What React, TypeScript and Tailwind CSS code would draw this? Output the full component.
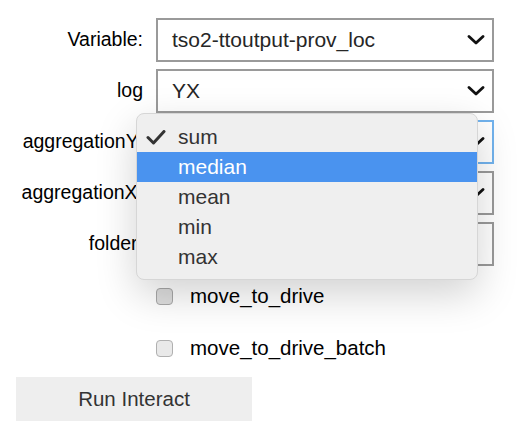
import React from "react";

const Chevron = () => (
  <svg width="18" height="10" viewBox="0 0 18 10" className="absolute right-[7px] top-1/2 -translate-y-1/2">
    <path d="M2 1.5 L9 8 L16 1.5" fill="none" stroke="#111" strokeWidth="2.8" strokeLinecap="round" strokeLinejoin="round" />
  </svg>
);

function SelectBox({ value, focused }: { value?: string; focused?: boolean }) {
  return (
    <div
      className={
        focused
          ? "relative ml-[13px] w-[338px] h-[44px] border-2 border-[#72b3ee] bg-white flex items-center pl-[14px] text-[21px] text-[#262626]"
          : "relative ml-[13px] w-[338px] h-[44px] border-2 border-[#9a9a9a] bg-white flex items-center pl-[14px] text-[21px] text-[#262626]"
      }
    >
      <span>{value}</span>
      <Chevron />
    </div>
  );
}

function Row({ label, value, focused, input }: { label: string; value?: string; focused?: boolean; input?: boolean }) {
  return (
    <div className="flex items-center h-[44px]">
      <div className="w-[143px] text-right text-[19.5px] text-black whitespace-nowrap">{label}</div>
      {input ? (
        <div className="ml-[13px] w-[338px] h-[44px] border-2 border-[#9a9a9a] bg-white" />
      ) : (
        <SelectBox value={value} focused={focused} />
      )}
    </div>
  );
}

function CheckRow({ label, shaded }: { label: string; shaded?: boolean }) {
  return (
    <div className="flex items-center h-[44px] pl-[156px]">
      <div
        className={
          shaded
            ? "w-[17px] h-[17px] rounded-[4px] border border-[#a8a8a8] bg-[#dedede]"
            : "w-[17px] h-[17px] rounded-[4px] border border-[#b0b0b0] bg-[#e9e9e9]"
        }
      />
      <span className="ml-[17px] text-[20.5px] text-black">{label}</span>
    </div>
  );
}

export default function App() {
  const items = ["sum", "median", "mean", "min", "max"];
  return (
    <div
      className="relative w-[522px] h-[442px] bg-white overflow-hidden"
      style={{ fontFamily: '"Liberation Sans", Arial, Helvetica, sans-serif' }}
    >
      <div className="flex flex-col gap-[7px] pt-[18px]">
        <Row label="Variable:" value="tso2-ttoutput-prov_loc" />
        <Row label="log" value="YX" />
        <Row label="aggregationY:" value="sum" focused />
        <Row label="aggregationX:" value="sum" />
        <Row label="folder:" input />
        <div className="flex flex-col gap-[8px] pt-[1px]">
          <CheckRow label="move_to_drive" shaded />
          <CheckRow label="move_to_drive_batch" />
        </div>
        <div className="pl-[16px]">
          <button className="w-[236px] h-[44px] bg-[#eeeeee] text-[20.5px] text-[#333]">Run Interact</button>
        </div>
      </div>

      <div className="absolute left-[136px] top-[113px] w-[342px] h-[167px] rounded-[8px] bg-[#efefef] border border-[#d6d6d6] shadow-[0_14px_40px_rgba(0,0,0,0.18)] pt-[8px]">
        {items.map((it, i) => (
          <div
            key={it}
            className={
              i === 1
                ? "relative h-[30px] flex items-center pl-[41px] text-[21px] bg-[#4a93ef] text-white"
                : "relative h-[30px] flex items-center pl-[41px] text-[21px] text-[#333]"
            }
          >
            {i === 0 && (
              <svg width="20" height="15" viewBox="0 0 20 15" className="absolute left-[9px] top-[8px]">
                <path d="M2 7.5 L7.5 13 L18 1.5" fill="none" stroke="#333" strokeWidth="3" strokeLinecap="round" strokeLinejoin="round" />
              </svg>
            )}
            {it}
          </div>
        ))}
      </div>
    </div>
  );
}
